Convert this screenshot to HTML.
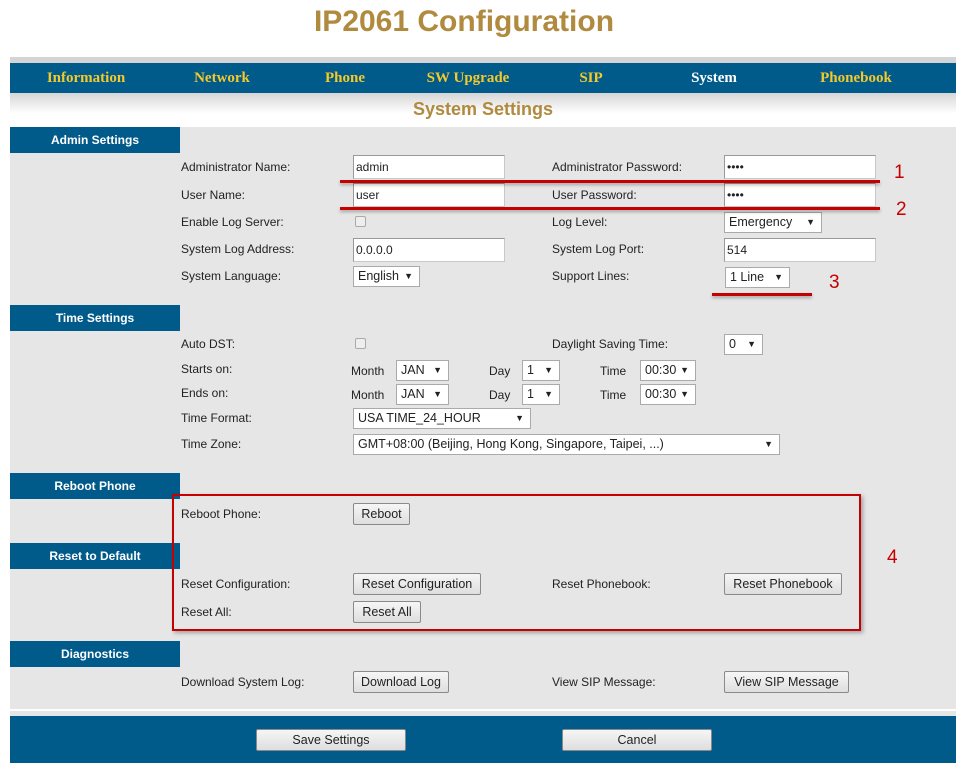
<!DOCTYPE html>
<html><head><meta charset="utf-8"><style>
*{margin:0;padding:0;box-sizing:border-box}
body{width:966px;height:771px;background:#fff;position:relative;font-family:"Liberation Sans",Arial,sans-serif;font-size:12px;color:#222;overflow:hidden}
.a{position:absolute}
.t{position:absolute;white-space:nowrap;line-height:14px;transform:translateY(-7px)}
.hd{position:absolute;left:10px;width:170px;height:26px;background:#005a8a;color:#fff;font-weight:bold;font-size:12px;text-align:center;line-height:26px}
.in{position:absolute;background:#fff;border:1px solid #c8c8c8;border-top-color:#999;border-left-color:#999;height:24px;width:152px;padding-left:2px;line-height:22px;font-size:12px}
.sel{position:absolute;background:#fff;border:1px solid #aaa;height:21px;line-height:19px;padding-left:4px;font-size:12.5px}
.sel:after{content:"▼";position:absolute;right:6px;top:0;font-size:9px}
.btn{position:absolute;background:linear-gradient(#f6f6f6,#dedede);border:1px solid #8a8a8a;height:22px;line-height:20px;text-align:center;font-size:12.5px;border-radius:2px}
.nav{position:absolute;top:63px;line-height:30px;font-family:"Liberation Serif",serif;font-weight:bold;font-size:15px;color:#f3c92c;transform:translateX(-50%)}
.red{position:absolute;background:#c40000;height:3px;box-shadow:0 2px 3px rgba(0,0,0,.3)}
.num{position:absolute;color:#c40000;font-size:19px}
.cb{position:absolute;width:11px;height:11px;border:1px solid #aaa;border-radius:2px;background:#eee}
</style></head><body>
<div class="a" style="left:0;top:4px;width:928px;text-align:center;font-size:30px;font-weight:bold;color:#b08a3e;line-height:36px">IP2061 Configuration</div>
<div class="a" style="left:10px;top:57px;width:946px;height:6px;background:#d4d4d4"></div>
<div class="a" style="left:10px;top:63px;width:946px;height:30px;background:#005a8a"></div>
<div class="nav" style="left:86px">Information</div>
<div class="nav" style="left:222px">Network</div>
<div class="nav" style="left:345px">Phone</div>
<div class="nav" style="left:468px">SW Upgrade</div>
<div class="nav" style="left:591px">SIP</div>
<div class="nav" style="left:714px;color:#fff">System</div>
<div class="nav" style="left:856px">Phonebook</div>
<div class="a" style="left:10px;top:93px;width:946px;height:34px;background:linear-gradient(#d6d6d6,#fff 60%)"></div>
<div class="a" style="left:10px;top:98px;width:946px;text-align:center;font-size:18px;font-weight:bold;color:#b08a3e;line-height:22px">System Settings</div>
<div class="a" style="left:10px;top:127px;width:946px;height:582px;background:#e6e6e6"></div>
<div class="a" style="left:10px;top:709px;width:946px;height:2px;background:#fff"></div>
<div class="a" style="left:10px;top:711px;width:946px;height:5px;background:#e6e6e6"></div>
<div class="a" style="left:10px;top:716px;width:946px;height:47px;background:#005a8a"></div>

<div class="hd" style="top:127px">Admin Settings</div>
<div class="t" style="left:181px;top:167px">Administrator Name:</div>
<div class="in" style="left:353px;top:155px">admin</div>
<div class="t" style="left:552px;top:167px">Administrator Password:</div>
<div class="in" style="left:724px;top:155px">••••</div>
<div class="t" style="left:181px;top:195px">User Name:</div>
<div class="in" style="left:353px;top:183px">user</div>
<div class="t" style="left:552px;top:195px">User Password:</div>
<div class="in" style="left:724px;top:183px">••••</div>
<div class="t" style="left:181px;top:222px">Enable Log Server:</div>
<div class="cb" style="left:355px;top:216px"></div>
<div class="t" style="left:552px;top:222px">Log Level:</div>
<div class="sel" style="left:724px;top:212px;width:98px">Emergency</div>
<div class="t" style="left:181px;top:249px">System Log Address:</div>
<div class="in" style="left:353px;top:238px">0.0.0.0</div>
<div class="t" style="left:552px;top:249px">System Log Port:</div>
<div class="in" style="left:724px;top:238px">514</div>
<div class="t" style="left:181px;top:276px">System Language:</div>
<div class="sel" style="left:353px;top:266px;width:67px">English</div>
<div class="t" style="left:552px;top:276px">Support Lines:</div>
<div class="sel" style="left:725px;top:267px;width:65px">1 Line</div>
<div class="red" style="left:340px;top:180px;width:540px"></div>
<div class="red" style="left:340px;top:207px;width:540px"></div>
<div class="red" style="left:712px;top:293px;width:100px"></div>
<div class="num" style="left:894px;top:162px">1</div>
<div class="num" style="left:896px;top:199px">2</div>
<div class="num" style="left:829px;top:272px">3</div>

<div class="hd" style="top:305px">Time Settings</div>
<div class="t" style="left:181px;top:344px">Auto DST:</div>
<div class="cb" style="left:355px;top:338px"></div>
<div class="t" style="left:552px;top:344px">Daylight Saving Time:</div>
<div class="sel" style="left:724px;top:334px;width:39px">0</div>
<div class="t" style="left:181px;top:369px">Starts on:</div>
<div class="t" style="left:351px;top:371px">Month</div>
<div class="sel" style="left:396px;top:360px;width:53px">JAN</div>
<div class="t" style="left:489px;top:371px">Day</div>
<div class="sel" style="left:522px;top:360px;width:38px">1</div>
<div class="t" style="left:600px;top:371px">Time</div>
<div class="sel" style="left:640px;top:360px;width:56px">00:30</div>
<div class="t" style="left:181px;top:393px">Ends on:</div>
<div class="t" style="left:351px;top:395px">Month</div>
<div class="sel" style="left:396px;top:384px;width:53px">JAN</div>
<div class="t" style="left:489px;top:395px">Day</div>
<div class="sel" style="left:522px;top:384px;width:38px">1</div>
<div class="t" style="left:600px;top:395px">Time</div>
<div class="sel" style="left:640px;top:384px;width:56px">00:30</div>
<div class="t" style="left:181px;top:418px">Time Format:</div>
<div class="sel" style="left:353px;top:408px;width:178px">USA TIME_24_HOUR</div>
<div class="t" style="left:181px;top:444px">Time Zone:</div>
<div class="sel" style="left:353px;top:434px;width:427px">GMT+08:00 (Beijing, Hong Kong, Singapore, Taipei, ...)</div>

<div class="hd" style="top:473px">Reboot Phone</div>
<div class="t" style="left:181px;top:514px">Reboot Phone:</div>
<div class="btn" style="left:353px;top:503px;width:57px">Reboot</div>
<div class="hd" style="top:543px">Reset to Default</div>
<div class="t" style="left:181px;top:584px">Reset Configuration:</div>
<div class="btn" style="left:353px;top:573px;width:128px">Reset Configuration</div>
<div class="t" style="left:552px;top:584px">Reset Phonebook:</div>
<div class="btn" style="left:724px;top:573px;width:118px">Reset Phonebook</div>
<div class="t" style="left:181px;top:612px">Reset All:</div>
<div class="btn" style="left:353px;top:601px;width:68px">Reset All</div>
<div class="a" style="left:172px;top:494px;width:689px;height:137px;border:2px solid #c40000;box-shadow:2px 2px 4px rgba(0,0,0,.3)"></div>
<div class="num" style="left:887px;top:547px">4</div>

<div class="hd" style="top:641px">Diagnostics</div>
<div class="t" style="left:181px;top:682px">Download System Log:</div>
<div class="btn" style="left:353px;top:671px;width:96px">Download Log</div>
<div class="t" style="left:552px;top:682px">View SIP Message:</div>
<div class="btn" style="left:724px;top:671px;width:125px">View SIP Message</div>

<div class="btn" style="left:256px;top:729px;width:150px">Save Settings</div>
<div class="btn" style="left:562px;top:729px;width:150px">Cancel</div>
</body></html>
